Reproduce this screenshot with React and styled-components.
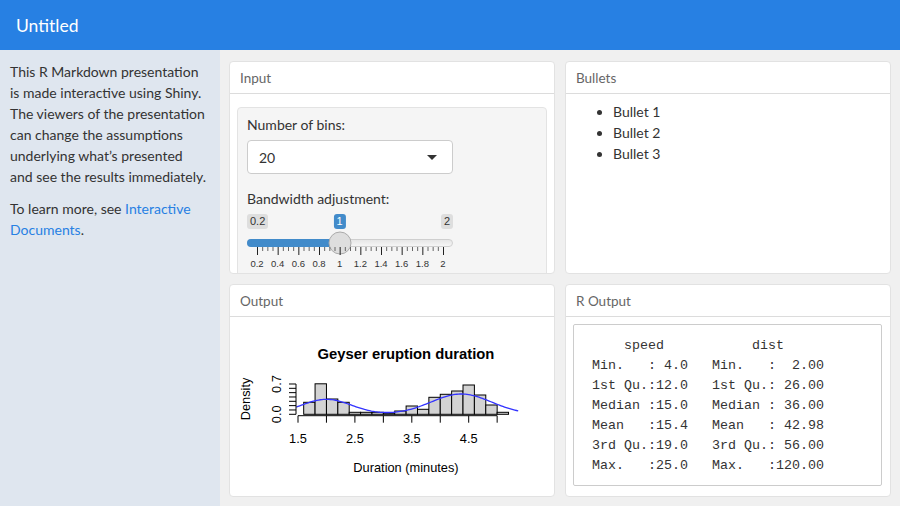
import React from "react";
import styled, { createGlobalStyle } from "styled-components";

const GlobalStyle = createGlobalStyle`
  html, body { margin: 0; padding: 0; }
  body {
    font-family: "Source Sans Pro", Lato, "Open Sans", sans-serif;
    color: #333;
    background: #f0f0f0;
  }
  * { box-sizing: border-box; }
`;

const Page = styled.div`
  width: 900px;
  height: 506px;
  display: flex;
  flex-direction: column;
  overflow: hidden;
`;

const TopBar = styled.header`
  height: 50px;
  flex: none;
  background: #2780e3;
  color: #fff;
  display: flex;
  align-items: center;
  padding-left: 16px;
  font-size: 17.5px;
`;

const Body = styled.div`
  flex: 1;
  display: flex;
  min-height: 0;
`;

const Sidebar = styled.aside`
  width: 220px;
  flex: none;
  background: #dfe6ef;
  padding: 11px 10px 10px 10px;
  font-size: 14px;
  line-height: 21px;
`;

const Para = styled.p`
  margin: 0 0 11px 0;
`;

const Link = styled.a`
  color: #2780e3;
  text-decoration: none;
`;

const Main = styled.main`
  flex: 1;
  display: grid;
  grid-template-columns: 1fr 1fr;
  grid-template-rows: 1fr 1fr;
  gap: 10px;
  padding: 11px 9px 9px 9px;
  background: #f0f0f0;
`;

const Card = styled.section`
  background: #fff;
  border: 1px solid #e2e2e2;
  border-radius: 4px;
  display: flex;
  flex-direction: column;
  overflow: hidden;
  min-height: 0;
`;

const CardTitle = styled.div`
  height: 32px;
  flex: none;
  display: flex;
  align-items: center;
  padding: 0 10px;
  border-bottom: 1px solid #dcdcdc;
  font-size: 13.5px;
  color: #666;
`;

const CardBody = styled.div`
  flex: 1;
  min-height: 0;
  overflow: hidden;
  padding: ${(p) => p.$pad || "0"};
`;

const Well = styled.div`
  background: #f5f5f5;
  border: 1px solid #e3e3e3;
  border-radius: 4px;
  padding: 7px 9px 20px 9px;
  margin-top: 5px;
  font-size: 14px;
`;

const FormGroup = styled.div`
  width: 206px;
  margin-bottom: ${(p) => p.$mb || "15px"};
`;

const Label = styled.div`
  line-height: 20px;
  margin-bottom: 5px;
`;

const SelectBox = styled.div`
  height: 34px;
  background: #fff;
  border: 1px solid #ccc;
  border-radius: 4px;
  display: flex;
  align-items: center;
  justify-content: space-between;
  padding: 0 15px 0 11px;
  font-size: 14px;
`;

const Caret = styled.span`
  width: 0;
  height: 0;
  border-left: 5px solid transparent;
  border-right: 5px solid transparent;
  border-top: 5px solid #333;
`;

const Slider = styled.div`
  position: relative;
  width: 206px;
  font-family: "Liberation Sans", Arial, sans-serif;
`;

const EndLabels = styled.div`
  display: flex;
  justify-content: space-between;
  height: 15px;
`;

const Tag = styled.span`
  font-size: 11px;
  line-height: 15px;
  padding: 0 3px;
  border-radius: 3px;
  background: ${(p) => (p.$active ? "#428bca" : "#dedede")};
  color: ${(p) => (p.$active ? "#fff" : "#333")};
`;

const ValueTag = styled(Tag)`
  position: absolute;
  top: 0;
  transform: translateX(-50%);
`;

const Track = styled.div`
  position: relative;
  margin-top: 10px;
  height: 8px;
  border-radius: 8px;
  background: linear-gradient(#e6e6e6, #f5f5f5);
  border: 1px solid #cfcfcf;
`;

const Fill = styled.div`
  position: absolute;
  left: -1px;
  top: -1px;
  height: 8px;
  border-radius: 8px 0 0 8px;
  background: #428bca;
`;

const Handle = styled.div`
  position: absolute;
  top: 50%;
  width: 23px;
  height: 23px;
  border-radius: 50%;
  background: #dedede;
  border: 1px solid #ababab;
  transform: translate(-50%, -50%);
`;

const Grid = styled.div`
  position: relative;
  height: 24px;
  margin: 0 10px;
`;

const GridLabel = styled.span`
  position: absolute;
  top: 11px;
  font-size: 9.5px;
  line-height: 12px;
  color: #333;
  transform: translateX(-50%);
`;

const BulletList = styled.ul`
  margin: 7px 0 0 0;
  padding-left: 39px;
  font-size: 14px;
  line-height: 21px;
`;

const Pre = styled.pre`
  margin: 0;
  padding: 11px 10px 9px 10px;
  background: #fff;
  border: 1px solid #cccccc;
  border-radius: 2px;
  font-family: "Liberation Mono", "Courier New", monospace;
  font-size: 13.33px;
  line-height: 20px;
  color: #333;
  white-space: pre;
`;

/* ---------- Slider ---------- */
const MIN = 0.2;
const MAX = 2;
const VALUE = 1;

function BandwidthSlider() {
  const gridFrac = (VALUE - MIN) / (MAX - MIN);
  const pos = `calc(10px + ${gridFrac} * (100% - 20px))`;
  const majors = [];
  for (let i = 0; i <= 9; i++) majors.push(+(MIN + i * 0.2).toFixed(1));
  const ticks = [];
  for (let i = 0; i <= 36; i++) {
    const x = (i / 36) * 186;
    const major = i % 4 === 0;
    ticks.push(
      <line key={i} x1={x + 0.5} x2={x + 0.5} y1={0} y2={major ? 8 : 4} stroke={major ? "#222" : "#666"} strokeWidth="1" />
    );
  }
  return (
    <Slider>
      <EndLabels>
        <Tag>0.2</Tag>
        <Tag>2</Tag>
      </EndLabels>
      <ValueTag $active style={{ left: pos }}>1</ValueTag>
      <Track>
        <Fill style={{ width: `calc(11px + ${gridFrac} * (100% - 20px))` }} />
        <Handle style={{ left: `calc(9px + ${gridFrac} * (100% - 18px))` }} />
      </Track>
      <Grid>
        <svg width="187" height="9" style={{ display: "block", marginLeft: "-0.5px" }}>
          {ticks}
        </svg>
        {majors.map((m, i) => (
          <GridLabel key={m} style={{ left: `${(i / 9) * 100}%` }}>
            {m === 1 ? "1" : m === 2 ? "2" : m.toFixed(1)}
          </GridLabel>
        ))}
      </Grid>
    </Slider>
  );
}

/* ---------- Histogram (drawing) ---------- */
const X0 = 298;
const XS = 56.9;
const BASE = 414.3;
const YS = 43.3;
const px = (v) => X0 + (v - 1.5) * XS;
const heights = [12, 30.5, 15.3, 12, 2, 2, 2, 1.2, 3.3, 8.3, 5, 17, 20, 23.3, 29.3, 19.3, 9.3, 2];

function densityPath() {
  const pts = [];
  for (let v = 1.47; v <= 5.375; v += 0.03) {
    const h =
      15 * Math.exp(-((v - 2.0) ** 2) / (2 * 0.44 * 0.44)) +
      20.3 * Math.exp(-((v - 4.37) ** 2) / (2 * 0.53 * 0.53));
    pts.push(`${px(v).toFixed(2)},${(BASE - h).toFixed(2)}`);
  }
  return "M" + pts.join(" L");
}

const ChartSvg = styled.svg`
  display: block;
  font-family: "Liberation Sans", Arial, sans-serif;
`;

function GeyserChart() {
  const yTicks = [];
  for (let i = 0; i <= 7; i++) {
    const y = BASE - i * 0.1 * YS;
    yTicks.push(<line key={i} x1={289} x2={296} y1={y} y2={y} stroke="#000" strokeWidth="1" />);
  }
  const xTicks = [];
  for (let v = 1.5; v <= 5.001; v += 0.5) {
    xTicks.push(<line key={v} x1={px(v)} x2={px(v)} y1={415.7} y2={422.7} stroke="#000" strokeWidth="1" />);
  }
  return (
    <ChartSvg width="324" height="180" viewBox="230 317 324 180">
      <text x="406" y="358.5" textAnchor="middle" fontWeight="bold" fontSize="14.8" fill="#000">
        Geyser eruption duration
      </text>
      {heights.map((h, i) => (
        <rect
          key={i}
          x={px(1.6 + i * 0.2)}
          y={BASE - h}
          width={0.2 * XS}
          height={h}
          fill="#d3d3d3"
          stroke="#000"
          strokeWidth="1"
        />
      ))}
      <path d={densityPath()} fill="none" stroke="#3333ff" strokeWidth="1.3" />
      <line x1={296} x2={296} y1={BASE} y2={BASE - 0.7 * YS} stroke="#000" strokeWidth="1" />
      {yTicks}
      <line x1={px(1.5)} x2={px(5.0)} y1={415.7} y2={415.7} stroke="#000" strokeWidth="1" />
      {xTicks}
      {[1.5, 2.5, 3.5, 4.5].map((v) => (
        <text key={v} x={px(v)} y="442.5" textAnchor="middle" fontSize="12.8" fill="#000">
          {v.toFixed(1)}
        </text>
      ))}
      <text x="406" y="471.5" textAnchor="middle" fontSize="12.8" fill="#000">
        Duration (minutes)
      </text>
      <text transform="translate(249.5 399) rotate(-90)" textAnchor="middle" fontSize="12.8" fill="#000">
        Density
      </text>
      <text transform={`translate(281.3 ${BASE}) rotate(-90)`} textAnchor="middle" fontSize="12.8" fill="#000">
        0.0
      </text>
      <text transform={`translate(281.3 ${BASE - 0.7 * YS}) rotate(-90)`} textAnchor="middle" fontSize="12.8" fill="#000">
        0.7
      </text>
    </ChartSvg>
  );
}

const summary = [
  "     speed           dist       ",
  " Min.   : 4.0   Min.   :  2.00  ",
  " 1st Qu.:12.0   1st Qu.: 26.00  ",
  " Median :15.0   Median : 36.00  ",
  " Mean   :15.4   Mean   : 42.98  ",
  " 3rd Qu.:19.0   3rd Qu.: 56.00  ",
  " Max.   :25.0   Max.   :120.00  ",
].join("\n");

export default function App() {
  return (
    <Page>
      <GlobalStyle />
      <TopBar>Untitled</TopBar>
      <Body>
        <Sidebar>
          <Para>
            This R Markdown presentation is made interactive using Shiny. The viewers of the presentation can
            change the assumptions underlying what’s presented
            <br />
            and see the results immediately.
          </Para>
          <Para>
            To learn more, see <Link href="#">Interactive Documents</Link>.
          </Para>
        </Sidebar>
        <Main>
          <Card>
            <CardTitle>Input</CardTitle>
            <CardBody $pad="8px 7px 0 7px">
              <Well>
                <FormGroup>
                  <Label>Number of bins:</Label>
                  <SelectBox>
                    <span>20</span>
                    <Caret />
                  </SelectBox>
                </FormGroup>
                <FormGroup $mb="0">
                  <Label>Bandwidth adjustment:</Label>
                  <BandwidthSlider />
                </FormGroup>
              </Well>
            </CardBody>
          </Card>
          <Card>
            <CardTitle>Bullets</CardTitle>
            <CardBody $pad="0 8px">
              <BulletList>
                <li>Bullet 1</li>
                <li>Bullet 2</li>
                <li>Bullet 3</li>
              </BulletList>
            </CardBody>
          </Card>
          <Card>
            <CardTitle>Output</CardTitle>
            <CardBody>
              <GeyserChart />
            </CardBody>
          </Card>
          <Card>
            <CardTitle>R Output</CardTitle>
            <CardBody $pad="7px 8px 7px 7px">
              <Pre>{summary}</Pre>
            </CardBody>
          </Card>
        </Main>
      </Body>
    </Page>
  );
}
